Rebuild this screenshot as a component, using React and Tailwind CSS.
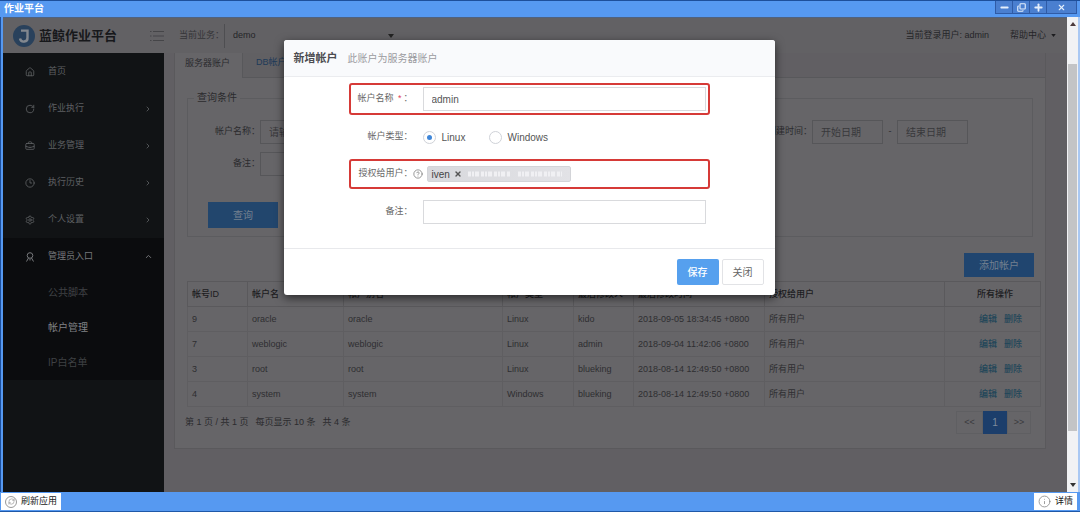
import React from 'react';
import {
  House, RotateCw, BriefcaseBusiness, Clock3, Settings,
  ChevronRight, ChevronUp, CircleHelp, Info, RefreshCw, X, Minus, Plus, Copy,
} from 'lucide-react';

const menu = [
  { label: '首页', Icon: House, leaf: true },
  { label: '作业执行', Icon: RotateCw },
  { label: '业务管理', Icon: BriefcaseBusiness },
  { label: '执行历史', Icon: Clock3 },
  { label: '个人设置', Icon: Settings },
];

const subMenu = [
  { label: '公共脚本' },
  { label: '帐户管理', active: true },
  { label: 'IP白名单' },
];

const accounts = [
  ['9', 'oracle', 'oracle', 'Linux', 'kido', '2018-09-05 18:34:45 +0800'],
  ['7', 'weblogic', 'weblogic', 'Linux', 'admin', '2018-09-04 11:42:06 +0800'],
  ['3', 'root', 'root', 'Linux', 'blueking', '2018-08-14 12:49:50 +0800'],
  ['4', 'system', 'system', 'Windows', 'blueking', '2018-08-14 12:49:50 +0800'],
];

const dimInput =
  'h-6 border border-[#565659] bg-transparent px-2 text-[10px] text-[#38383b] placeholder:text-[#38383b] outline-none';

function TitleBar() {
  const button = 'flex h-[13px] items-center justify-center border-r border-b border-[#2f5ba6] bg-[#4a7fd0] text-[#e4effc]';
  return (
    <div className="flex h-[17px] shrink-0 items-start border-t border-[#1d4f9b] bg-[#5699f1] pr-[3px] pl-1">
      <h1 className="flex-1 text-[10px] leading-4 font-bold text-white">作业平台</h1>
      <button aria-label="最小化" className={`${button} w-[18px] border-l`}><Minus size={11} strokeWidth={4} /></button>
      <button aria-label="还原" className={`${button} w-[17px]`}><Copy size={9} strokeWidth={3} className="-scale-x-100 rotate-180" /></button>
      <button aria-label="最大化" className={`${button} w-[17px]`}><Plus size={11} strokeWidth={4} /></button>
      <button aria-label="关闭窗口" className={`${button} w-[30px]`}><X size={9} strokeWidth={3} /></button>
    </div>
  );
}

function Header() {
  return (
    <header className="flex h-9 shrink-0 items-center border-t border-[#4f6280] bg-[#626164] text-[9px] text-[#252528]">
      <div className="flex w-[161px] items-center pl-[10px]">
        <svg viewBox="0 0 22 22" className="h-[22px] w-[22px] shrink-0" aria-hidden="true">
          <circle cx="11" cy="11" r="11" fill="#29415c" />
          <path d="M8 5.6H14.5V12.5A3.8 3.8 0 0 1 7 13.6" fill="none" stroke="#83888f" strokeWidth="2.4" />
        </svg>
        <span className="ml-1 text-[13px] font-bold whitespace-nowrap text-[#17181b]">蓝鲸作业平台</span>
        <button aria-label="折叠菜单" className="ml-auto text-[#454548]">
          <svg viewBox="0 0 14 12" className="h-3 w-3.5" fill="none" stroke="currentColor">
            <path d="M0 1.5H1.5M3 1.5H14M0 6H1.5M3 6H14M0 10.5H1.5M3 10.5H14" />
          </svg>
        </button>
      </div>
      <label htmlFor="biz" className="ml-[15px] text-[#353538]">当前业务：</label>
      <div className="flex h-6 w-[174px] items-center border-l border-[#4e4e51]">
        <select id="biz" className="w-full appearance-none bg-transparent pl-2 text-[9px] outline-none">
          <option>demo</option>
        </select>
        <svg viewBox="0 0 6 4" className="mr-1 h-1 w-1.5 shrink-0" aria-hidden="true"><path d="M0 0H6L3 4Z" fill="#222" /></svg>
      </div>
      <span className="ml-auto">当前登录用户: admin</span>
      <button className="mr-[11px] ml-[21px] flex items-center gap-[5px]">
        帮助中心
        <svg viewBox="0 0 6 4" className="h-[3px] w-[5px]" aria-hidden="true"><path d="M0 0H6L3 4Z" fill="#1c1c1f" /></svg>
      </button>
    </header>
  );
}

function Sidebar() {
  return (
    <nav className="w-[161px] shrink-0 bg-[#111315] text-[9px] text-[#5e6063]">
      {menu.map(({ label, Icon, leaf }) => (
        <a key={label} href="#" className="flex h-[37px] items-center pr-3 pl-[22px]">
          <Icon size={10} strokeWidth={2} />
          <span className="ml-[13px] flex-1">{label}</span>
          {!leaf && <ChevronRight size={8} strokeWidth={2.5} />}
        </a>
      ))}
      <div className="bg-[#0b0c0e]">
        <a href="#" className="flex h-[37px] items-center pr-[11px] pl-[22px] text-[#77797c]">
          <svg viewBox="0 0 10 10" width="10" height="10" fill="none" stroke="currentColor" aria-hidden="true">
            <circle cx="5" cy="3.5" r="2.8" />
            <path d="M3.5 6L1.5 9.5M6.5 6L8.5 9.5M5 7V8.5" />
          </svg>
          <span className="ml-[13px] flex-1">管理员入口</span>
          <ChevronUp size={9} strokeWidth={2.5} />
        </a>
        {subMenu.map(({ label, active }) => (
          <a key={label} href="#" className={`flex h-[35px] items-center pl-[45px] text-[10px] ${active ? 'text-[#808285]' : 'text-[#3f4144]'}`}>
            {label}
          </a>
        ))}
      </div>
    </nav>
  );
}

function SearchForm() {
  return (
    <fieldset className="mx-3 mt-3 h-[147px] border border-[#5c5c5f] text-[9px]">
      <legend className="ml-[6px] px-[3px] text-[10px] leading-4 text-[#2b2b2e]">查询条件</legend>
      <div className="mt-[14px] mr-16 flex items-center">
        <label htmlFor="q-name" className="w-[72px] text-right">帐户名称：</label>
        <input id="q-name" placeholder="请输入" className={`${dimInput} w-[120px]`} />
        <label htmlFor="q-from" className="ml-auto">创建时间：</label>
        <input id="q-from" placeholder="开始日期" className={`${dimInput} w-[71px]`} />
        <span className="w-[14px] text-center">-</span>
        <input aria-label="结束日期" placeholder="结束日期" className={`${dimInput} w-[71px]`} />
      </div>
      <div className="mt-2 flex items-center">
        <label htmlFor="q-note" className="w-[72px] text-right">备注：</label>
        <input id="q-note" className={`${dimInput} w-[120px]`} />
      </div>
      <button className="mt-[26px] ml-5 h-[26px] w-[70px] bg-[#22466d] text-[10px] text-[#73808f]">查询</button>
    </fieldset>
  );
}

function AccountTable() {
  const cell = 'border border-[#5f5e61] px-1 pt-[2px] font-normal';
  const head = 'border border-[#5a595c] pt-[2px] font-medium';
  return (
    <table className="w-full table-fixed border-collapse text-left text-[9px] text-[#2e2e31]">
      <colgroup>
        <col className="w-[60px]" /><col className="w-[96px]" /><col className="w-[159px]" /><col className="w-[71px]" />
        <col className="w-[60px]" /><col className="w-[131px]" /><col /><col className="w-[96px]" />
      </colgroup>
      <thead>
        <tr className="h-[25px] text-[#1c1c1f]">
          {['帐号ID', '帐户名', '帐户别名', '帐户类型', '最后修改人', '最后修改时间', '授权给用户'].map((h) => (
            <th key={h} className={`${head} px-1 whitespace-nowrap`}>{h}</th>
          ))}
          <th className={`${head} pl-8`}>所有操作</th>
        </tr>
      </thead>
      <tbody>
        {accounts.map((row) => (
          <tr key={row[0]} className="h-[25px]">
            {row.map((value, i) => <td key={i} className={`${cell} whitespace-nowrap`}>{value}</td>)}
            <td className={cell}>所有用户</td>
            <td className="border border-[#5f5e61] pt-[2px] pl-[34px] text-[#1f4659]">
              <a href="#" className="font-medium">编辑</a>
              <a href="#" className="ml-[7px] font-medium">删除</a>
            </td>
          </tr>
        ))}
      </tbody>
    </table>
  );
}

function MainPanel() {
  return (
    <main className="min-w-0 flex-1 bg-[#615f63] pr-[21px] pl-[10px] text-[#2b2b2e]">
      <section className="h-[396px] border-r border-b border-l border-[#5a595c] bg-[#666568]">
        <div className="flex h-[25px] text-[9px]">
          <button className="w-[67px] pb-1 pl-[10px] text-left whitespace-nowrap">服务器账户</button>
          <button className="border-b border-l border-[#58585b] bg-[#616063] pb-1 pl-[13px] text-left text-[#1d3a59]">DB帐户</button>
          <span className="flex-1 border-b border-[#58585b] bg-[#615f63]" />
        </div>
        <SearchForm />
        <div className="mx-1 mt-4 mb-1 flex justify-end pr-[7px]">
          <button className="h-6 w-[70px] bg-[#20456f] text-[10px] text-[#73808f]">添加帐户</button>
        </div>
        <div className="pr-1 pl-3">
          <AccountTable />
        </div>
        <div className="flex items-center justify-between pr-[14px] pl-[10px] pt-1 text-[9px]">
          <p className="flex gap-[7px] whitespace-nowrap">
            <span>第 1 页 / 共 1 页</span><span>每页显示 10 条</span><span>共 4 条</span>
          </p>
          <div className="flex h-[23px] text-center text-[#39393c]">
            <button className="w-[27px] border border-[#5f5f62]">&lt;&lt;</button>
            <button className="w-6 bg-[#1c3e6b] text-[10px] text-[#7c8b9c]">1</button>
            <button className="w-[24px] border border-[#5f5f62]">&gt;&gt;</button>
          </div>
        </div>
      </section>
    </main>
  );
}

function AccountDialog() {
  const label = 'w-[62px] shrink-0 text-right text-[9px] whitespace-nowrap text-[#666]';
  const field = 'h-6 min-w-0 flex-1 border border-[#d9dadd] bg-white px-2 text-[10px] text-[#555] outline-none';
  const row = 'flex items-center border-2 pr-[2px]';
  const marked = 'rounded-[3px] border-[#d63a37]';
  const radio =
    'h-[13px] w-[13px] appearance-none rounded-full border border-[#cfd2d8] bg-white bg-clip-content p-[3px] checked:bg-[#3f86d8]';
  return (
    <div role="dialog" aria-labelledby="dlg-title" className="w-[491px] max-w-full overflow-hidden rounded-[3px] bg-white shadow-[0_3px_10px_rgba(0,0,0,0.6)]">
      <div className="flex h-[37px] items-center gap-[10px] border-b border-[#ebecef] bg-[#f9fafc] px-[10px]">
        <h2 id="dlg-title" className="text-[11px] font-bold text-[#4c4c50]">新增帐户</h2>
        <span className="text-[10px] text-[#9b9b9f]">此账户为服务器账户</span>
      </div>
      <form className="flex flex-col gap-[11px] px-[65px] pt-[6px] pb-6" onSubmit={(e) => e.preventDefault()}>
        <div className={`${row} ${marked} h-8`}>
          <label htmlFor="name" className={label}>帐户名称 <span className="mx-[2px] text-[#e0405c]">*</span>：</label>
          <span className="w-[10px] shrink-0" />
          <input id="name" defaultValue="admin" className={field} />
        </div>
        <div role="radiogroup" aria-label="帐户类型" className={`${row} h-[22px] border-transparent text-[10px] text-[#555]`}>
          <span className={label}>帐户类型：</span>
          <span className="w-[10px] shrink-0" />
          <label className="flex w-[66px] items-center gap-[6px]">
            <input type="radio" name="type" defaultChecked className={radio} />Linux
          </label>
          <label className="flex items-center gap-[6px]">
            <input type="radio" name="type" className={radio} />Windows
          </label>
        </div>
        <div className={`${row} ${marked} h-[30px]`}>
          <label htmlFor="users" className={label}>授权给用户：</label>
          <span className="w-[10px] shrink-0 text-[#777]"><CircleHelp size={10} strokeWidth={1.8} /></span>
          <div className="flex h-6 min-w-0 flex-1 items-center pl-1">
            <span className="flex h-4 w-36 shrink-0 items-center gap-1 rounded-[2px] border border-[#d3d4d8] bg-linear-to-r from-[#d8d9dd] to-[#e2e2e6] pl-1 text-[10px] text-[#444]">
              iven
              <button aria-label="移除 iven" className="text-[#555]"><X size={8} strokeWidth={4} /></button>
              <svg viewBox="0 0 100 8" className="h-2 w-[100px]" aria-hidden="true">
                <path d="M2 4H44M52 4H96" stroke="#f0f0f3" strokeWidth="5" strokeDasharray="3 1 2 1 4 2" />
              </svg>
            </span>
            <input id="users" className="min-w-0 flex-1 bg-transparent px-1 text-[10px] outline-none" />
          </div>
        </div>
        <div className="flex items-center border-x-2 border-transparent pr-[2px]">
          <label htmlFor="note" className={label}>备注：</label>
          <span className="w-[10px] shrink-0" />
          <input id="note" className={field} />
        </div>
      </form>
      <div className="flex h-[47px] items-center justify-end gap-[3px] border-t border-[#e8e9ec] px-[11px] text-[10px]">
        <button className="h-[26px] w-[42px] rounded-[2px] bg-[#56a0ee] font-medium text-white">保存</button>
        <button className="h-[26px] w-[42px] rounded-[2px] border border-[#e2e3e6] bg-white text-[#666]">关闭</button>
      </div>
    </div>
  );
}

function ScrollTrack() {
  return (
    <div aria-hidden="true" className="flex w-[11px] shrink-0 flex-col items-center bg-[#f1f2f4]">
      <svg viewBox="0 0 6 4" className="mt-[5px] h-1 w-1.5"><path d="M0 4H6L3 0Z" fill="#4b3a3c" /></svg>
      <div className="mt-[38px] mb-[52px] w-[9px] flex-1 bg-[#c3c4c6]" />
      <svg viewBox="0 0 6 4" className="mb-[5px] h-1 w-1.5"><path d="M0 0H6L3 4Z" fill="#333" /></svg>
    </div>
  );
}

function StatusBar() {
  const button = 'flex h-[17px] items-center gap-1 bg-white text-[9px] text-[#222]';
  return (
    <footer className="flex h-5 shrink-0 items-center justify-between border-b border-[#1f58a8] bg-[#5699f1] pr-[3px] pl-px">
      <button className={`${button} px-1`}>
        <span className="flex h-3 w-3 items-center justify-center rounded-full border border-[#999]">
          <RefreshCw size={7} strokeWidth={2} color="#888" />
        </span>
        刷新应用
      </button>
      <button className={`${button} px-1`}>
        <Info size={13} strokeWidth={1.5} color="#888" />
        详情
      </button>
    </footer>
  );
}

export default function App() {
  return (
    <div className="flex min-h-screen flex-col bg-[#5699f1] font-['Liberation_Sans','Noto_Sans_CJK_SC',sans-serif]">
      <TitleBar />
      <div className="flex flex-1 border-r-2 border-l border-r-[#a9c8f3] border-l-[#1d4f9b]">
        <div className="relative flex min-w-0 flex-1 flex-col border-l-2 border-[#5699f1]">
          <Header />
          <div className="flex flex-1">
            <Sidebar />
            <MainPanel />
          </div>
          <div className="absolute inset-0 flex items-start justify-center pt-[23px] pr-3">
            <AccountDialog />
          </div>
        </div>
        <ScrollTrack />
      </div>
      <StatusBar />
    </div>
  );
}
